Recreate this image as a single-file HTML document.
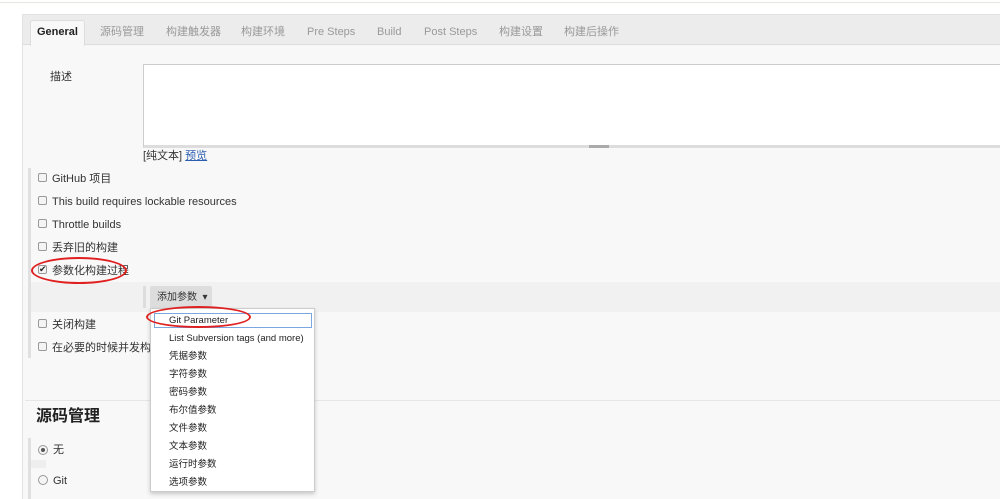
<!DOCTYPE html>
<html style="overflow:hidden;height:499px"><head><meta charset="utf-8"><style>
*{box-sizing:border-box;margin:0;padding:0}
body{width:1000px;height:499px;overflow:hidden;background:#fff;font-family:"Liberation Sans","Noto Sans CJK SC",sans-serif;font-size:11px;line-height:13px;color:#333;position:relative}
.abs{position:absolute}
.panel{left:22px;top:14px;width:990px;height:485px;background:#f8f8f8;border:1px solid #e2e2e2;border-bottom:none}
.tabs{left:23px;top:15px;width:980px;height:30px;background:#ececec;border-bottom:1px solid #ddd}
.tab{position:absolute;top:11px;color:#999;font-size:11px}
.cb{position:absolute;width:9px;height:9px;border:1px solid #999;border-radius:2px;background:#f4f4f4}
.lbl{position:absolute;color:#333}
.dd div{position:absolute;left:18px;color:#222;font-size:9.5px;line-height:11px}
</style></head><body>
<div class="abs" style="left:0;top:0;width:1000px;height:3px;border-bottom:1px solid #e6e6e0"></div>
<div class="abs panel"></div>
<div class="abs tabs"></div>
<div class="abs" style="left:30px;top:20px;width:55px;height:26px;background:#f8f8f8;border:1px solid #ddd;border-bottom:none;border-radius:3px 3px 0 0"></div>
<div class="tab" style="left:37px;top:26px;color:#222;font-weight:bold">General</div>
<div class="tab" style="left:100px;top:26px">源码管理</div>
<div class="tab" style="left:166px;top:26px">构建触发器</div>
<div class="tab" style="left:241px;top:26px">构建环境</div>
<div class="tab" style="left:307px;top:26px">Pre Steps</div>
<div class="tab" style="left:377px;top:26px">Build</div>
<div class="tab" style="left:424px;top:26px">Post Steps</div>
<div class="tab" style="left:499px;top:26px">构建设置</div>
<div class="tab" style="left:564px;top:26px">构建后操作</div>
<div class="lbl" style="left:50px;top:71px">描述</div>
<div class="abs" style="left:143px;top:64px;width:870px;height:84px;background:#fff;border:1px solid #ccc;border-bottom:3px solid #ddd"></div>
<div class="abs" style="left:589px;top:145px;width:20px;height:3px;background:#aaa"></div>
<div class="lbl" style="left:143px;top:150px">[纯文本] <span style="color:#2a5db0;text-decoration:underline">预览</span></div>
<div class="abs" style="left:28px;top:168px;width:3px;height:190px;background:#e0e0e0"></div>
<div class="abs" style="left:31px;top:282px;width:970px;height:30px;background:#f1f1f1"></div>
<div class="cb" style="left:38px;top:173px"></div><div class="lbl" style="left:52px;top:173px">GitHub 项目</div>
<div class="cb" style="left:38px;top:196px"></div><div class="lbl" style="left:52px;top:196px">This build requires lockable resources</div>
<div class="cb" style="left:38px;top:219px"></div><div class="lbl" style="left:52px;top:219px">Throttle builds</div>
<div class="cb" style="left:38px;top:242px"></div><div class="lbl" style="left:52px;top:242px">丢弃旧的构建</div>
<div class="cb" style="left:38px;top:265px;font-size:9px;line-height:7px;color:#222">✔</div><div class="lbl" style="left:52px;top:265px">参数化构建过程</div>
<div class="abs" style="left:31px;top:257px;width:96px;height:27px;border:2px solid #e02020;border-radius:50%"></div>
<div class="abs" style="left:143px;top:286px;width:3px;height:22px;background:#ddd"></div>
<div class="abs" style="left:150px;top:286px;width:62px;height:22px;background:#ddd;border-radius:2px"></div>
<div class="lbl" style="left:157px;top:291px;font-size:10px">添加参数 &nbsp;▾</div>
<div class="cb" style="left:38px;top:319px"></div><div class="lbl" style="left:52px;top:319px">关闭构建</div>
<div class="cb" style="left:38px;top:342px"></div><div class="lbl" style="left:52px;top:342px">在必要的时候并发构建</div>
<div class="abs" style="left:25px;top:400px;width:980px;height:1px;background:#e6e6e6"></div>
<div class="lbl" style="left:36px;top:407px;font-size:16px;line-height:20px;font-weight:bold;color:#222">源码管理</div>
<div class="abs" style="left:28px;top:438px;width:3px;height:70px;background:#e0e0e0"></div>
<div class="abs" style="left:31px;top:460px;width:15px;height:8px;background:#eee"></div>
<div class="abs" style="left:38px;top:445px;width:10px;height:10px;border:1px solid #999;border-radius:50%;background:#f4f4f4"><div style="margin:2px;width:4px;height:4px;border-radius:50%;background:#555"></div></div>
<div class="lbl" style="left:53px;top:444px">无</div>
<div class="abs" style="left:38px;top:475px;width:10px;height:10px;border:1px solid #999;border-radius:50%;background:#f4f4f4"></div>
<div class="lbl" style="left:53px;top:475px">Git</div>
<div class="abs dd" style="left:150px;top:308px;width:165px;height:184px;background:#fff;border:1px solid #ccc;box-shadow:0 2px 4px rgba(0,0,0,.2)">
<div style="left:3px;top:4px;width:158px;height:15px;border:1px solid #7aa7e0"></div>
<div style="top:6px">Git Parameter</div>
<div style="top:24px">List Subversion tags (and more)</div>
<div style="top:42px">凭据参数</div>
<div style="top:60px">字符参数</div>
<div style="top:78px">密码参数</div>
<div style="top:96px">布尔值参数</div>
<div style="top:114px">文件参数</div>
<div style="top:132px">文本参数</div>
<div style="top:150px">运行时参数</div>
<div style="top:168px">选项参数</div>
</div>
<div class="abs" style="left:146px;top:306px;width:105px;height:22px;border:2px solid #e02020;border-radius:50%"></div>
</body></html>
